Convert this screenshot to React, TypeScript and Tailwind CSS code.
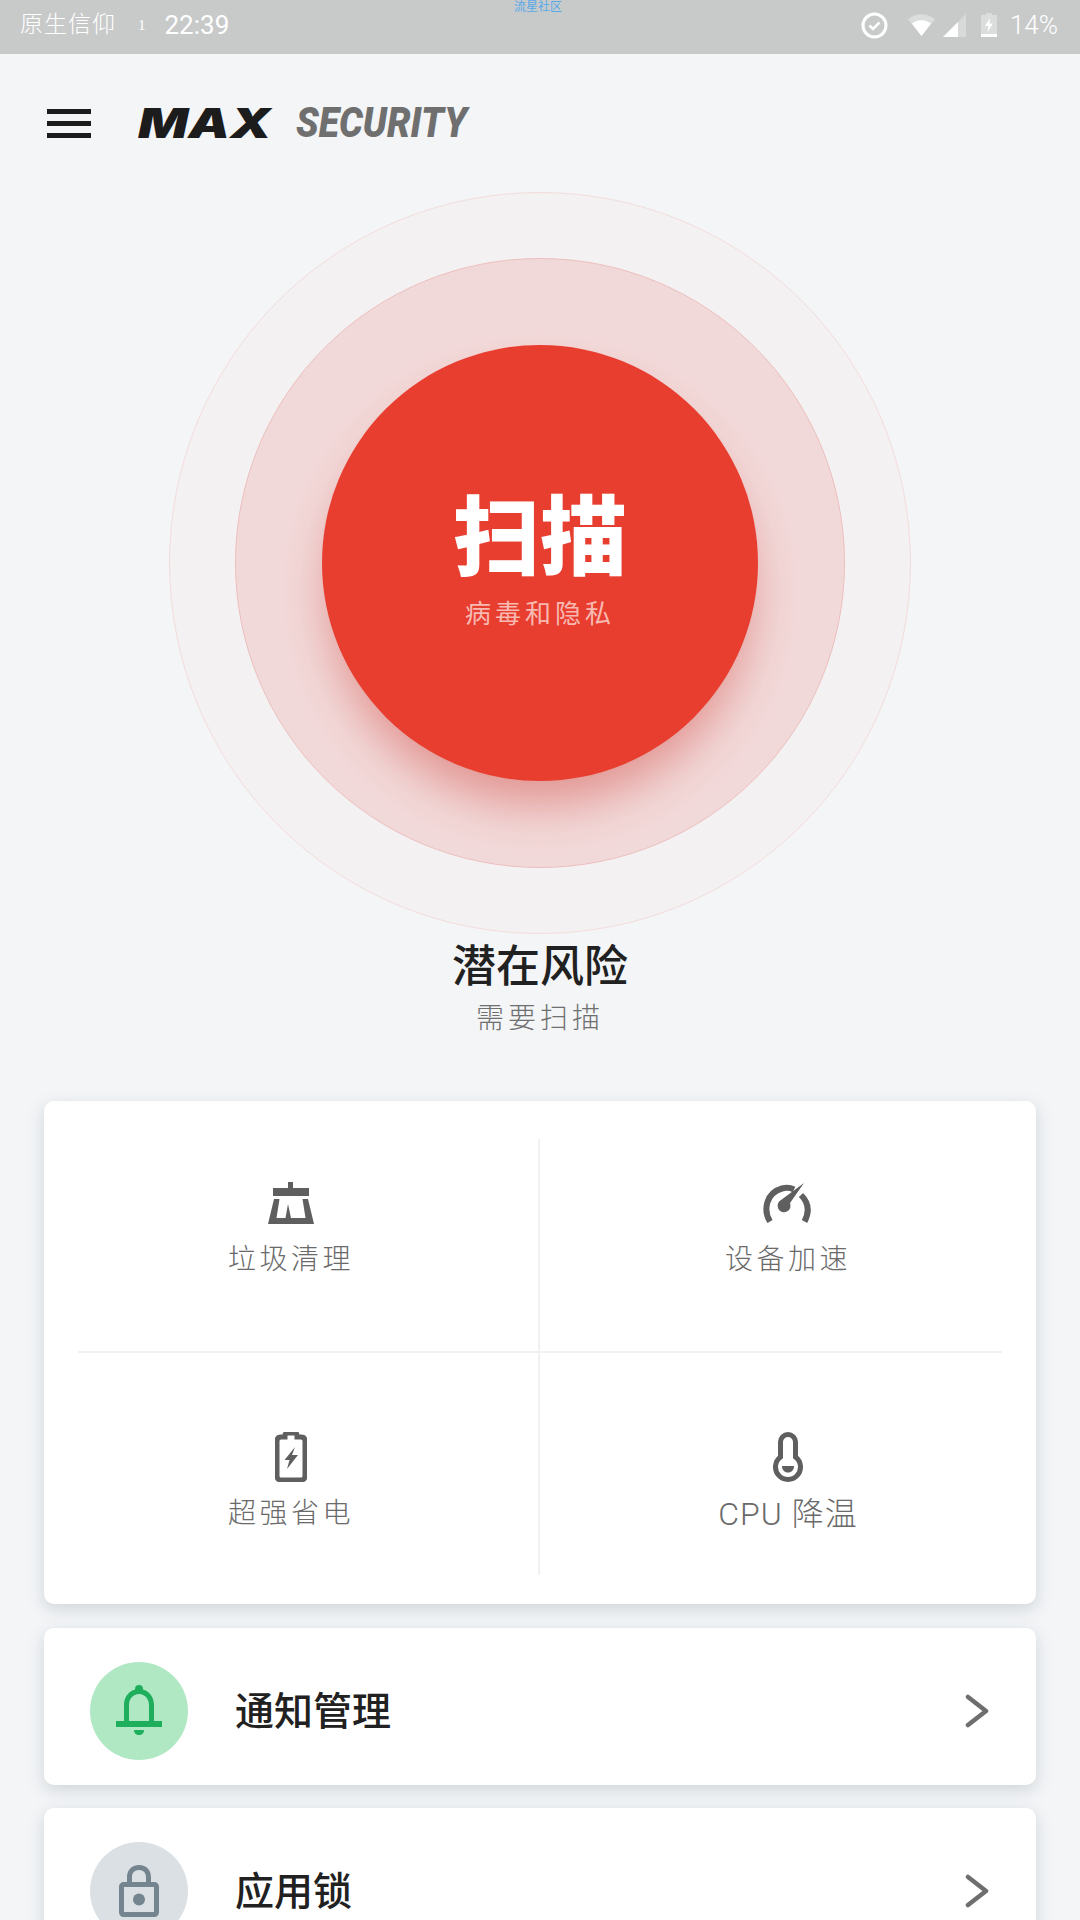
const cjk = "font-['Roboto','Noto_Sans_CJK_SC',sans-serif]";

function CheckCircle() {
  return (
    <svg width="27" height="27" viewBox="0 0 27 27" fill="none" stroke="#fff" strokeWidth="3">
      <circle cx="13.5" cy="13.5" r="11.5" />
      <path d="M8.5 13.5l3.5 3.5 6.5-6.5" strokeWidth="2.5" />
    </svg>
  );
}

function StatusIcons() {
  return (
    <div className="flex items-center">
      <CheckCircle />
      <svg className="ml-[20px]" width="27" height="22" viewBox="0 0 27 22">
        <path d="M0 5.5C7.5-1.5 19.5-1.5 27 5.5L13.5 22z" fill="#fff" fillOpacity="0.35" />
        <path d="M4 9.5c5.500-4.500 13.500-4.500 19 0L13.500 22z" fill="#fff" />
      </svg>
      <svg className="ml-[8px]" width="23" height="23" viewBox="0 0 23 23">
        <path d="M23 0v23H0z" fill="#fff" fillOpacity="0.3" />
        <path d="M15 8v15H0z" fill="#fff" />
      </svg>
      <svg className="ml-[15px]" width="16" height="24" viewBox="0 0 16 24">
        <path d="M0 2h5V0h6v2h5v22H0z" fill="#fff" fillOpacity="0.35" />
        <path d="M0 21h16v3H0z" fill="#fff" />
        <path d="M9 5L4 13h3.500L6.500 19 12 10.500H8.500z" fill="#fff" />
      </svg>
    </div>
  );
}

function StatusBar() {
  return (
    <div className={`relative flex h-[54px] shrink-0 items-center justify-between bg-[#c8caca] pb-[4px] pl-[20px] pr-[22px] text-white ${cjk}`}>
      <div className="flex items-center">
        <span className="text-[23px] font-light tracking-[1px]">原生信仰</span>
        <span className="ml-[22px] font-['Liberation_Serif',serif] text-[15px]">1</span>
        <span className="ml-[19px] text-[26px]">22:39</span>
      </div>
      <span className="absolute left-[514px] top-0 text-[12px] leading-[14px] text-[#55a9ea]">流星社区</span>
      <div className="flex items-center">
        <StatusIcons />
        <span className="ml-[13px] text-[26px] font-light">14%</span>
      </div>
    </div>
  );
}

function Header() {
  return (
    <div className="flex h-[138px] shrink-0 items-center pl-[47px]">
      <div className="flex w-[44px] flex-col gap-[7px]">
        <div className="h-[5px] bg-[#1c1c1c]" />
        <div className="h-[5px] bg-[#1c1c1c]" />
        <div className="h-[5px] bg-[#1c1c1c]" />
      </div>
      <span className="ml-[47px] w-[132px] origin-left scale-x-[1.28] font-['Inter',sans-serif] text-[41px] font-black italic leading-none text-[#1c1c1c]">
        MAX
      </span>
      <span className="ml-[26px] origin-left scale-x-[0.89] font-['Roboto',sans-serif] text-[42px] font-black italic leading-none text-[#6f6f6f]">
        SECURITY
      </span>
    </div>
  );
}

function Hero() {
  return (
    <div className={`flex shrink-0 flex-col items-center ${cjk}`}>
      <div className="flex h-[742px] w-[742px] items-center justify-center rounded-full border border-[#f4dcdc] bg-[#f3f1f1]">
        <div className="flex h-[610px] w-[610px] items-center justify-center rounded-full border border-[#edbfbf] bg-[#f2d9d9]">
          <div className="flex h-[436px] w-[436px] flex-col items-center rounded-full bg-[#e83e30] pt-[146px] shadow-[0_30px_45px_-6px_rgba(205,60,50,0.42)]">
            <span className="text-[87px] font-black leading-[96px] text-white">扫描</span>
            <span className="mt-[11px] text-[26px] leading-[32px] tracking-[4px] text-[#f8b9b1]">病毒和隐私</span>
          </div>
        </div>
      </div>
      <h1 className="mt-[5px] text-[44px] font-medium leading-[56px] text-[#212121]">潜在风险</h1>
      <p className="mt-[4px] text-[28px] font-light leading-[40px] tracking-[4px] text-[#6f6f6f]">需要扫描</p>
    </div>
  );
}

function BroomIcon() {
  return (
    <svg width="46" height="42" viewBox="0 0 46 42" fill="#5f5f5f">
      <path d="M20 0h5v6h16v8H5V6h15z" />
      <path d="M6 17h5.500L8.500 36h9L20 22l3 14h14.500L34.500 17H40l6 25H0z" />
    </svg>
  );
}

function GaugeIcon() {
  return (
    <svg className="mr-[3px]" width="50" height="40" viewBox="0 0 50 40" fill="none">
      <path d="M8 38.500C1 27 4 10 20 5.500c4-1 9-.5 12 1M39 12c8 8 8.500 17 3.500 26.500" stroke="#5f5f5f" strokeWidth="6" />
      <path d="M42 0L28 20a6.500 6.500 0 1 1-9-3z" fill="#5f5f5f" />
    </svg>
  );
}

function BatteryIcon() {
  return (
    <svg width="32" height="50" viewBox="0 0 32 50" fill="none">
      <path d="M10 5V3.500C10 2 11 1 12.500 1h7C21 1 22 2 22 3.500V5h4c3 0 4 1.500 4 4v35c0 2.500-1 4-4 4H6c-3 0-4-1.500-4-4V9c0-2.500 1-4 4-4z" stroke="#5f5f5f" strokeWidth="5" />
      <path d="M20 15L9.500 28h5L12 37l11-14h-6z" fill="#5f5f5f" />
    </svg>
  );
}

function ThermoIcon() {
  return (
    <svg width="30" height="50" viewBox="0 0 30 50" fill="none">
      <path d="M7.500 25V10a7.500 7.500 0 0 1 15 0v15a12.500 12.500 0 1 1-15 0z" stroke="#5f5f5f" strokeWidth="5" />
      <path d="M9 34h12c0 4-2.500 6.500-6 6.500S9 38 9 34z" fill="#5f5f5f" />
    </svg>
  );
}

function BellIcon() {
  return (
    <svg width="46" height="52" viewBox="0 0 46 52" fill="#1fae5c">
      <circle cx="23" cy="4" r="4" />
      <path fillRule="evenodd" d="M23 4c9 0 15 7 15 16v16h8v6H0v-6h8V20C8 11 14 4 23 4zm0 5c-6 0-10 5-10 11v16h20V20c0-6-4-11-10-11z" />
      <path d="M18 45h10c0 3-2 5-5 5s-5-2-5-5z" />
    </svg>
  );
}

function LockIcon() {
  return (
    <svg width="40" height="52" viewBox="0 0 40 52" fill="#75858f">
      <path fillRule="evenodd" d="M20 0c7.500 0 12 5 12 12v5h3c3 0 5 2 5 5v25c0 3-2 5-5 5H5c-3 0-5-2-5-5V22c0-3 2-5 5-5h3v-5C8 5 12.500 0 20 0zm0 5c-4.500 0-7 3-7 7v5h14v-5c0-4-2.500-7-7-7zM5 22v25h30V22z" />
      <circle cx="20" cy="34.500" r="6" />
    </svg>
  );
}

function Chevron() {
  return (
    <svg width="24" height="34" viewBox="0 0 24 34" fill="none" stroke="#6e6e6e" strokeWidth="4.500" strokeLinecap="round" strokeLinejoin="round">
      <path d="M3 3l18 14L3 31" />
    </svg>
  );
}

const tools = [
  { label: "垃圾清理", icon: <BroomIcon />, size: "text-[28px] font-light tracking-[3.5px]" },
  { label: "设备加速", icon: <GaugeIcon />, size: "text-[28px] font-light tracking-[3.5px]" },
  { label: "超强省电", icon: <BatteryIcon />, size: "text-[28px] font-light tracking-[3.5px]" },
  { label: "CPU 降温", icon: <ThermoIcon />, size: "text-[32px] font-light tracking-[1px]" },
];

function ToolCard() {
  return (
    <div className={`mx-[44px] mt-[62px] h-[503px] shrink-0 rounded-[10px] bg-white px-[34px] pt-[38px] shadow-[0_5px_16px_rgba(120,130,140,0.28)] ${cjk}`}>
      <div className="grid h-[436px] grid-cols-2 grid-rows-[214px_1fr]">
        {tools.map((t, i) => (
          <div
            key={t.label}
            className={`flex flex-col items-center border-[#f1f1f1] ${i % 2 === 0 ? "border-r-2 pr-[34px]" : "pl-[34px]"} ${i < 2 ? "border-b-2 pt-[39px]" : "pt-[79px]"}`}
          >
            <div className="flex h-[50px] items-center justify-center">{t.icon}</div>
            <span className={`mt-[12px] leading-[40px] text-[#6a6a6a] ${t.size}`}>{t.label}</span>
          </div>
        ))}
      </div>
    </div>
  );
}

function ListRow({ label, icon, circle }: { label: string; icon: React.ReactNode; circle: string }) {
  return (
    <div className={`mx-[44px] flex h-[157px] shrink-0 items-center rounded-[10px] bg-white pl-[46px] pr-[47px] pt-[8px] shadow-[0_5px_16px_rgba(120,130,140,0.28)] ${cjk}`}>
      <div className={`flex h-[98px] w-[98px] items-center justify-center rounded-full ${circle}`}>{icon}</div>
      <span className="ml-[47px] mt-[4px] flex-1 text-[39px] font-medium text-[#212121]">{label}</span>
      <Chevron />
    </div>
  );
}

export default function App() {
  return (
    <div className="flex h-[1920px] w-[1080px] flex-col overflow-hidden bg-[#f3f5f7]">
      <StatusBar />
      <Header />
      <Hero />
      <ToolCard />
      <div className="mt-[24px] flex shrink-0 flex-col gap-[23px]">
        <ListRow label="通知管理" icon={<BellIcon />} circle="bg-[#b0e8c4]" />
        <ListRow label="应用锁" icon={<LockIcon />} circle="bg-[#dae0e3]" />
      </div>
    </div>
  );
}
